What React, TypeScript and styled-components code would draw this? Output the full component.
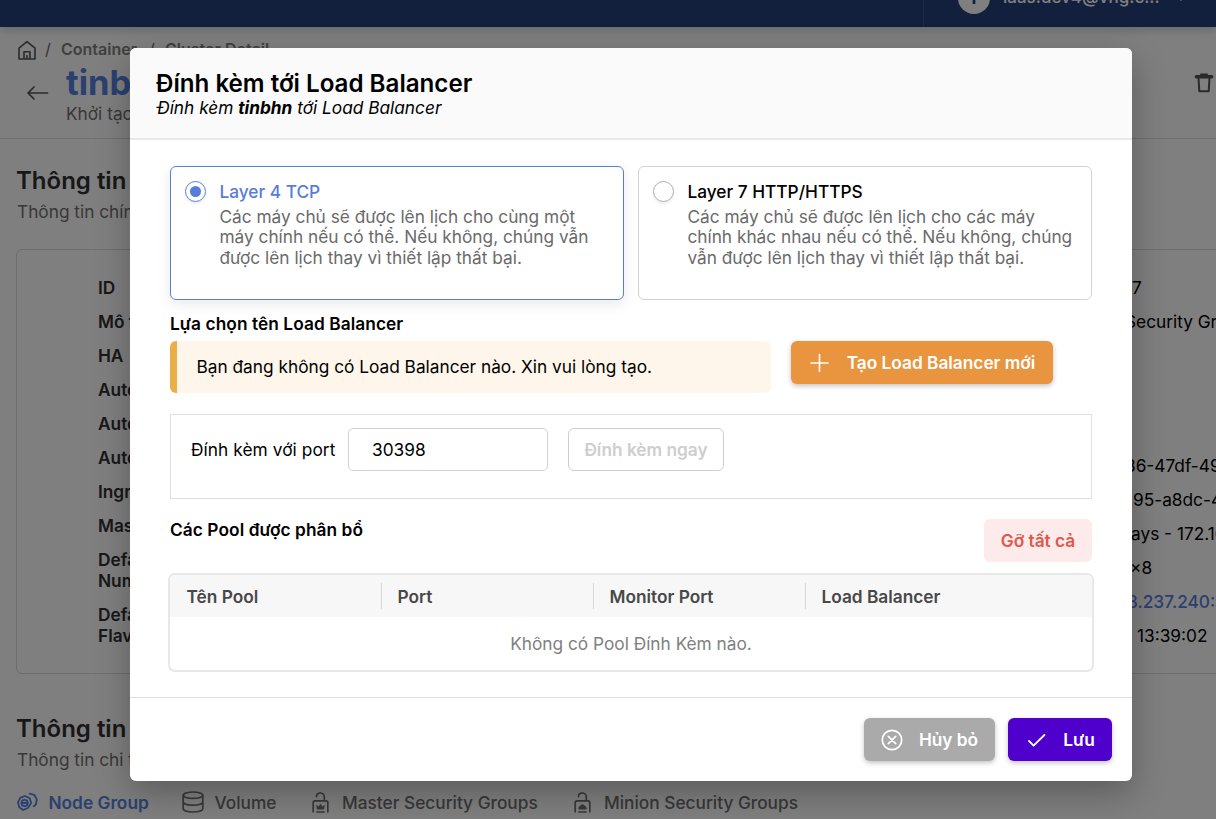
import React from "react";
import styled, { createGlobalStyle, css } from "styled-components";

const GlobalStyle = createGlobalStyle`
  *, *::before, *::after { box-sizing: border-box; }
  body {
    margin: 0;
    background: #fff;
    color: #000;
    font: 400 17.28px/20.7px Inter, "Liberation Sans", sans-serif;
    -webkit-font-smoothing: antialiased;
  }
  button, input { font: inherit; }
`;

const Screen = styled.div`
  position: relative;
  height: 819px;
  overflow: hidden;
  white-space: nowrap;
`;

/* ---------- page behind the dialog ---------- */

const TopBar = styled.header`
  display: flex;
  justify-content: flex-end;
  height: 27px;
  background: #243e7a;
  box-shadow: 0 2px 12px rgba(0, 0, 0, 0.22);
`;

const Account = styled.div`
  display: flex;
  align-items: flex-end;
  width: 293px;
  height: 27px;
  padding-left: 34px;
  border-left: 1px solid #3a568f;
  color: #fff;
  font-weight: 500;
`;

const Avatar = styled.div`
  flex: none;
  display: flex;
  align-items: center;
  justify-content: center;
  width: 32px;
  height: 32px;
  margin: 0 13px 13px 0;
  border-radius: 50%;
  background: #fff;
  color: #243e7a;
  font-weight: 700;
`;

const AccountName = styled.span`
  margin-bottom: 19px;
  font-size: 17px;
`;

const Caret = styled.svg`
  margin: 0 0 25px 15px;
`;

const PageHead = styled.div`
  display: flex;
  justify-content: space-between;
  height: 112px;
  padding: 13px 2px 0 17px;
  border-bottom: 1px solid #dcdcdc;
`;

const Breadcrumb = styled.nav`
  display: flex;
  align-items: center;
  height: 20px;
  color: #808080;
  font-size: 16px;
  font-weight: 600;
  svg { margin-right: 8px; }
`;

const Slash = styled.span`
  width: 16px;
  margin-top: -1px;
  color: #666;
  font-weight: 400;
`;

const Crumb = styled.span<{ $w: number }>`
  width: ${(p) => p.$w}px;
  margin-top: -1px;
`;

const TitleRow = styled.div`
  display: flex;
  padding: 3px 0 0 9px;
  svg { margin: 22px 17px 0 0; }
`;

const ClusterName = styled.h1`
  margin: 0 0 1px;
  color: #5680e0;
  font-size: 34.5px;
  line-height: 40px;
  font-weight: 700;
`;

const Muted = styled.p`
  margin: 0;
  color: #707070;
`;

const TrashSlot = styled.div`
  padding-top: 33px;
`;

const Section = styled.section<{ $top: number }>`
  padding: ${(p) => p.$top}px 0 0 17px;
`;

const SectionTitle = styled.h2`
  margin: 0 0 6px -1px;
  color: #303030;
  font-size: 24px;
  line-height: 30px;
  font-weight: 600;
`;

const InfoCard = styled.div`
  display: flex;
  justify-content: space-between;
  width: 1240px;
  height: 425px;
  margin: 26px 0 0 -1px;
  padding: 28px 0 0 81px;
  border: 1px solid #dcdcdc;
  border-radius: 6px;
`;

const Labels = styled.div`
  display: grid;
  align-content: start;
  row-gap: 13.4px;
  color: #303030;
  font-weight: 600;
  white-space: pre-line;
`;

const Values = styled.div`
  width: 130px;
`;

const Value = styled.div<{ $indent: number; $before?: number; $link?: boolean }>`
  height: 34.1px;
  margin-top: ${(p) => p.$before ?? 0}px;
  padding-left: ${(p) => p.$indent}px;
  color: ${(p) => (p.$link ? "#5680e0" : "#000")};
  font-weight: ${(p) => (p.$link ? 500 : 400)};
`;

const Tabs = styled.div`
  display: flex;
  align-items: center;
  height: 24px;
  margin-top: 21px;
  svg { margin-top: -2px; }
`;

const Tab = styled.div<{ $active?: boolean; $w: number; $gap: number }>`
  display: flex;
  align-items: center;
  gap: ${(p) => p.$gap}px;
  width: ${(p) => p.$w}px;
  color: ${(p) => (p.$active ? "#5680e0" : "#707070")};
  font-weight: ${(p) => (p.$active ? 600 : 500)};
`;

/* ---------- dialog ---------- */

const Backdrop = styled.div`
  position: absolute;
  inset: 0;
  padding: 48px 84px 38px 130px;
  background: rgba(0, 0, 0, 0.5);
`;

const Dialog = styled.div`
  display: flex;
  flex-direction: column;
  height: 733px;
  border-radius: 6px;
  background: #fff;
  overflow: hidden;
  box-shadow: 0 12px 34px rgba(0, 0, 0, 0.28);
`;

const DialogHead = styled.div`
  height: 92px;
  padding: 21px 26px 0;
  background: #fafafa;
  border-bottom: 2px solid #e8e8e8;
`;

const DialogTitle = styled.h2`
  margin: 0;
  font-size: 24.15px;
  line-height: 29px;
  font-weight: 600;
`;

const DialogSubtitle = styled.p`
  margin: 0 0 0 1px;
  font-style: italic;
`;

const DialogBody = styled.div`
  flex: 1;
  padding: 26px 40px 0;
`;

const Options = styled.div`
  display: grid;
  grid-template-columns: 1fr 1fr;
  gap: 14px;
`;

const OptionCard = styled.label<{ $on?: boolean }>`
  display: flex;
  gap: 13.4px;
  height: 134px;
  padding: 14px 14px 0;
  border: 1px solid ${(p) => (p.$on ? "#567ddc" : "#d2d2d2")};
  border-radius: 6px;
  box-shadow: ${(p) => (p.$on ? "0 4px 14px rgba(0, 0, 0, 0.09)" : "none")};
`;

const Radio = styled.span<{ $on?: boolean }>`
  flex: none;
  display: flex;
  align-items: center;
  justify-content: center;
  width: 21px;
  height: 21px;
  border: 1px solid ${(p) => (p.$on ? "#567ddc" : "#acacac")};
  border-radius: 50%;
  box-shadow: 0 2px 3px rgba(0, 0, 0, 0.07);
  &::after {
    content: "";
    width: 11px;
    height: 11px;
    border-radius: 50%;
    background: ${(p) => (p.$on ? "#567ddc" : "transparent")};
  }
`;

const OptionCopy = styled.div`
  padding-top: 1px;
`;

const OptionTitle = styled.div<{ $on?: boolean }>`
  margin-bottom: 4px;
  color: ${(p) => (p.$on ? "#567ddc" : "#000")};
  font-weight: 500;
`;

const OptionText = styled.div`
  color: #6a6a6a;
  white-space: pre;
`;

const Heading = styled.h3`
  margin: 0;
  font-size: 17.28px;
  line-height: 21px;
  font-weight: 600;
  letter-spacing: 0.08px;
`;

const LoadBalancerHeading = styled(Heading)`
  margin-top: 13px;
`;

const NoticeRow = styled.div`
  display: flex;
  align-items: flex-start;
  gap: 20px;
  margin-top: 7px;
`;

const Notice = styled.div`
  width: 601px;
  height: 52px;
  padding: 16px 0 0 19.5px;
  border-left: 7px solid #ebae48;
  border-radius: 6px;
  background: #fef6ea;
`;

const buttonTone = {
  orange: css`background: #e9943f; color: #fff; box-shadow: 0 2px 5px rgba(0, 0, 0, 0.24);`,
  gray: css`background: #aaa; color: #fff; box-shadow: 0 2px 5px rgba(0, 0, 0, 0.24);`,
  violet: css`background: #4f00cd; color: #fff; box-shadow: 0 2px 5px rgba(0, 0, 0, 0.24);`,
  danger: css`background: #fdeaea; color: #e0584c;`,
  outline: css`background: #fff; color: #cecece; border: 1px solid #cecece;`,
};

const Button = styled.button<{ $tone: keyof typeof buttonTone; $w: number }>`
  display: flex;
  align-items: center;
  justify-content: center;
  gap: 16px;
  width: ${(p) => p.$w}px;
  height: 43px;
  padding: 2px 0 0;
  border: 0;
  border-radius: 6px;
  font-weight: 600;
  svg { margin-top: -2px; }
  ${(p) => buttonTone[p.$tone]}
`;

const PortBox = styled.div`
  display: flex;
  align-items: flex-start;
  height: 85px;
  margin-top: 21px;
  padding: 13px 20px;
  border: 1px solid #e0e0e0;
`;

const PortLabel = styled.span`
  width: 157px;
  padding-top: 12px;
  letter-spacing: 0.08px;
`;

const PortInput = styled.input`
  width: 200px;
  height: 43px;
  margin-right: 20px;
  padding: 0 23px;
  border: 1px solid #d2d2d2;
  border-radius: 5px;
  color: #000;
  outline: none;
`;

const PoolHead = styled.div`
  display: flex;
  justify-content: space-between;
  margin: 20px 0 11px;
`;

const Table = styled.div`
  height: 99px;
  margin: 0 -2px;
  border: 2px solid #e8e8e8;
  border-radius: 7px;
  overflow: hidden;
`;

const TableHead = styled.div`
  display: grid;
  grid-template-columns: 211px 212px 212px 1fr;
  align-items: center;
  height: 42px;
  background: #f7f7f7;
  color: #484848;
  font-weight: 600;
`;

const HeadCell = styled.div`
  height: 26px;
  padding: 3.5px 0 0 15.5px;
  border-left: 1px solid #d8d8d8;
  &:first-child { border-color: transparent; }
`;

const Empty = styled.div`
  padding-top: 17px;
  color: #808080;
  text-align: center;
`;

const DialogFoot = styled.div`
  display: flex;
  justify-content: flex-end;
  gap: 13px;
  height: 84px;
  padding: 20px 20px 0;
  border-top: 1px solid #e0e0e0;
`;

/* ---------- icons ---------- */

const HomeIcon = () => (
  <svg width="20" height="20" viewBox="0 0 20 20" fill="none" stroke="#555" strokeWidth="1.6" strokeLinejoin="round">
    <path d="M2 8.2 10 1.7l8 6.5V19H2Z" />
    <path d="M7 19v-7.2h6V19M10 15v4" />
  </svg>
);

const BackIcon = () => (
  <svg width="23" height="16" viewBox="0 0 23 16" fill="none" stroke="#555" strokeWidth="1.7" strokeLinecap="round" strokeLinejoin="round">
    <path d="M21.5 8H2M8 2 2 8l6 6" />
  </svg>
);

const TrashIcon = () => (
  <svg width="20" height="20" viewBox="0 0 20 20" fill="none" stroke="#555" strokeLinejoin="round">
    <path d="M7 1.5h6" strokeWidth="2" strokeLinecap="round" />
    <path d="M2.4 3.8h15.2" strokeWidth="3.6" strokeLinecap="round" />
    <path d="M4.5 5l.8 13.2h9.4L15.5 5" strokeWidth="2" />
  </svg>
);

const NodeIcon = () => (
  <svg width="21" height="20" viewBox="0 0 21 20" fill="none" stroke="currentColor" strokeWidth="1.8" strokeLinejoin="round" strokeLinecap="round">
    <path d="M8 4 12.800 6.200l1.300 4.900-2.900 4.700-5 2.200-4-2.700L1 10.400l2.200-4.600Z" />
    <circle cx="7.600" cy="11" r="3.200" />
    <path d="M5 11h5.200" />
    <path d="M12.600 1.600l4.600 1.200 2.700 4.800-1.200 5.200-2 1.400" />
  </svg>
);

const DatabaseIcon = () => (
  <svg width="22" height="22" viewBox="0 0 22 22" fill="none" stroke="currentColor" strokeWidth="1.7">
    <ellipse cx="11" cy="4.200" rx="9.800" ry="3.200" />
    <path d="M1.200 4.200v13.600c0 1.800 4.400 3.200 9.800 3.200s9.800-1.400 9.800-3.200V4.200M1.200 11c0 1.800 4.400 3.200 9.800 3.200s9.800-1.400 9.800-3.200" />
  </svg>
);

const LockIcon = ({ crown }: { crown?: boolean }) => (
  <svg width="17" height="21" viewBox="0 0 17 21" fill="none" stroke="currentColor" strokeWidth="1.7" strokeLinecap="round" strokeLinejoin="round">
    <path d="M4.500 4.600C4.500 2.300 6.100 1 8.200 1c2.300 0 4.100 1.600 4.100 3.800v4M1.200 19.800v-9.300q0-1.700 1.700-1.700h11.200q1.700 0 1.700 1.700v9.300M5 20h7" />
    {crown ? (
      <path d="M5 17.400h7l.9-4.600-2.500 1.600-1.900-2.600-1.900 2.600-2.500-1.600Z" fill="currentColor" stroke="none" />
    ) : (
      <path d="M4.500 17.400v-1.700q.4-2 2-2.300l1-.9h2l1 .9q1.600.3 2 2.300v1.700Z" fill="currentColor" stroke="none" />
    )}
  </svg>
);

const PlusIcon = () => (
  <svg width="22" height="22" viewBox="0 0 22 22" fill="none" stroke="currentColor" strokeWidth="1.6" strokeLinecap="round">
    <path d="M10.500 2.500v17M2 11h17" />
  </svg>
);

const CancelIcon = () => (
  <svg width="22" height="22" viewBox="0 0 22 22" fill="none" stroke="currentColor" strokeWidth="1.7" strokeLinecap="round">
    <circle cx="11" cy="11" r="9.700" />
    <path d="m7.300 7.300 7.400 7.400M14.700 7.300l-7.400 7.400" />
  </svg>
);

const CheckIcon = () => (
  <svg width="22" height="22" viewBox="0 0 22 22" fill="none" stroke="currentColor" strokeWidth="1.8" strokeLinecap="round" strokeLinejoin="round">
    <path d="m4 12 4.600 4.600L19.400 6" />
  </svg>
);

const labels = [
  "ID", "Mô tả", "HA", "Auto", "Auto", "Auto", "Ingress", "Master",
  "Default\nNumber", "Default\nFlavor",
];

const options = [
  {
    title: "Layer 4 TCP",
    text: "Các máy chủ sẽ được lên lịch cho cùng một\nmáy chính nếu có thể. Nếu không, chúng vẫn\nđược lên lịch thay vì thiết lập thất bại.",
    on: true,
  },
  {
    title: "Layer 7 HTTP/HTTPS",
    text: "Các máy chủ sẽ được lên lịch cho các máy\nchính khác nhau nếu có thể. Nếu không, chúng\nvẫn được lên lịch thay vì thiết lập thất bại.",
    on: false,
  },
];

export default function App() {
  return (
    <Screen>
      <GlobalStyle />
      <TopBar>
        <Account>
          <Avatar>I</Avatar>
          <AccountName>iaas.dev4@vng.c...</AccountName>
          <Caret width="12" height="8" viewBox="0 0 12 8" fill="none" stroke="#fff" strokeWidth="1.4">
            <path d="m1 1 5 5 5-5" />
          </Caret>
        </Account>
      </TopBar>
      <PageHead>
        <div>
          <Breadcrumb>
            <HomeIcon />
            <Slash>/</Slash>
            <Crumb $w={88}>Container</Crumb>
            <Slash>/</Slash>
            <Crumb $w={110}>Cluster Detail</Crumb>
          </Breadcrumb>
          <TitleRow>
            <BackIcon />
            <div>
              <ClusterName>tinbhn</ClusterName>
              <Muted>Khởi tạo</Muted>
            </div>
          </TitleRow>
        </div>
        <TrashSlot><TrashIcon /></TrashSlot>
      </PageHead>
      <Section $top={27}>
        <SectionTitle>Thông tin</SectionTitle>
        <Muted>Thông tin chính</Muted>
        <InfoCard>
          <Labels>
            {labels.map((label, i) => <div key={i}>{label}</div>)}
          </Labels>
          <Values>
            <Value $indent={7}>7</Value>
            <Value $indent={0}>Security Group</Value>
            <Value $indent={0} $before={110}>36-47df-49</Value>
            <Value $indent={8}>95-a8dc-4</Value>
            <Value $indent={6}>ays - 172.16</Value>
            <Value $indent={5}>×8</Value>
            <Value $indent={2} $link>8.237.240:</Value>
            <Value $indent={12}>13:39:02</Value>
          </Values>
        </InfoCard>
      </Section>
      <Section $top={40}>
        <SectionTitle>Thông tin</SectionTitle>
        <Muted>Thông tin chi tiết</Muted>
        <Tabs>
          <Tab $active $w={165} $gap={10.5}><NodeIcon />Node Group</Tab>
          <Tab $w={130} $gap={10.5}><DatabaseIcon />Volume</Tab>
          <Tab $w={262} $gap={13}><LockIcon crown />Master Security Groups</Tab>
          <Tab $w={262} $gap={13}><LockIcon />Minion Security Groups</Tab>
        </Tabs>
      </Section>

      <Backdrop>
        <Dialog role="dialog">
          <DialogHead>
            <DialogTitle>Đính kèm tới Load Balancer</DialogTitle>
            <DialogSubtitle>Đính kèm <b>tinbhn</b> tới Load Balancer</DialogSubtitle>
          </DialogHead>
          <DialogBody>
            <Options>
              {options.map((o) => (
                <OptionCard key={o.title} $on={o.on}>
                  <Radio $on={o.on} />
                  <OptionCopy>
                    <OptionTitle $on={o.on}>{o.title}</OptionTitle>
                    <OptionText>{o.text}</OptionText>
                  </OptionCopy>
                </OptionCard>
              ))}
            </Options>
            <LoadBalancerHeading>Lựa chọn tên Load Balancer</LoadBalancerHeading>
            <NoticeRow>
              <Notice>Bạn đang không có Load Balancer nào. Xin vui lòng tạo.</Notice>
              <Button $tone="orange" $w={262}><PlusIcon />Tạo Load Balancer mới</Button>
            </NoticeRow>
            <PortBox>
              <PortLabel>Đính kèm với port</PortLabel>
              <PortInput defaultValue="30398" />
              <Button $tone="outline" $w={156}>Đính kèm ngay</Button>
            </PortBox>
            <PoolHead>
              <Heading>Các Pool được phân bổ</Heading>
              <Button $tone="danger" $w={108}>Gỡ tất cả</Button>
            </PoolHead>
            <Table>
              <TableHead>
                <HeadCell>Tên Pool</HeadCell>
                <HeadCell>Port</HeadCell>
                <HeadCell>Monitor Port</HeadCell>
                <HeadCell>Load Balancer</HeadCell>
              </TableHead>
              <Empty>Không có Pool Đính Kèm nào.</Empty>
            </Table>
          </DialogBody>
          <DialogFoot>
            <Button $tone="gray" $w={131}><CancelIcon />Hủy bỏ</Button>
            <Button $tone="violet" $w={104}><CheckIcon />Lưu</Button>
          </DialogFoot>
        </Dialog>
      </Backdrop>
    </Screen>
  );
}
